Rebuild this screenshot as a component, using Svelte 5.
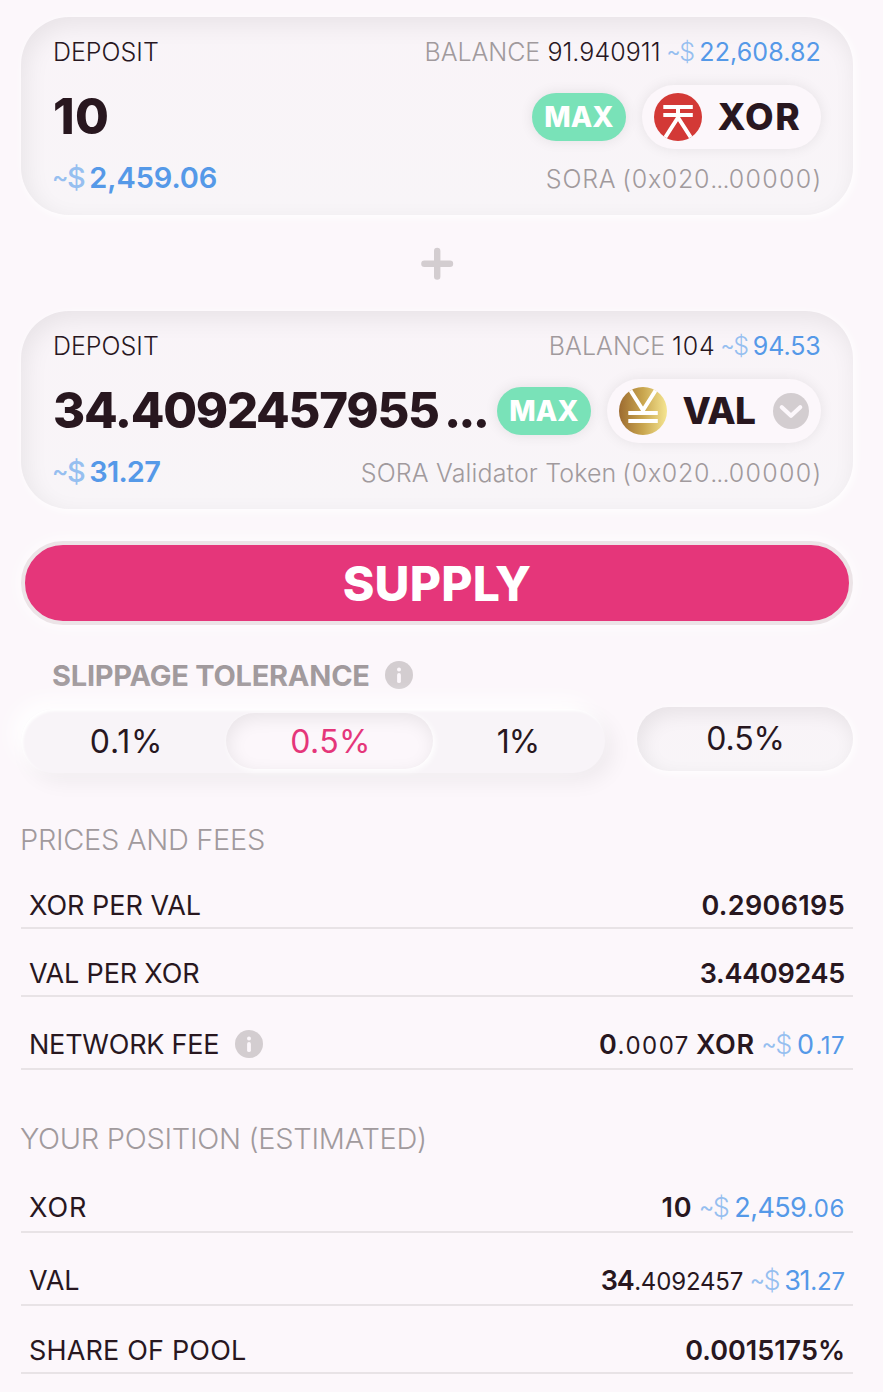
<script lang="ts">
  type Seg = { t: string; k?: string; ls?: number; ml?: number; fiat?: boolean };

  const address: Seg[] = [
    { t: '(0x020', ls: 0.7, ml: 5.9 },
    { t: '...', ls: -0.9 },
    { t: '00000)', ls: 1.3 }
  ];

  const cards = [
    {
      balance: [
        { t: 'BALANCE', k: 'muted', ls: -0.05 },
        { t: '91.940911', k: 'dark', ls: 0.05, ml: 7.2 },
        { t: '~$', fiat: true, ml: 6 },
        { t: '22,608.82', k: 'blue reg', ls: 0.1, ml: 4.2 }
      ] as Seg[],
      value: [{ t: '10', ls: 0.4 }] as Seg[],
      fiat: [
        { t: '~$', fiat: true },
        { t: '2,459.06', k: 'blue', ls: -0.1, ml: 3.6 }
      ] as Seg[],
      token: 'XOR',
      tokenLs: 1.58,
      selectable: false,
      info: [{ t: 'SORA', ls: 0.79 }, ...address] as Seg[],
      balanceEnd: 0.2
    },
    {
      balance: [
        { t: 'BALANCE', k: 'muted', ls: 0.05 },
        { t: '104', k: 'dark', ls: 0.8, ml: 6.9 },
        { t: '~$', fiat: true, ml: 5 },
        { t: '94.53', k: 'blue reg', ls: -0.11, ml: 3.8 }
      ] as Seg[],
      value: [
        { t: '34.4092457955', ls: -1.28 },
        { t: '...', ls: -2.9, ml: 5.2 }
      ] as Seg[],
      fiat: [
        { t: '~$', fiat: true },
        { t: '31.27', k: 'blue', ls: -0.8, ml: 3.6 }
      ] as Seg[],
      token: 'VAL',
      tokenLs: -0.7,
      selectable: true,
      info: [{ t: 'SORA Validator Token', ls: 0.14 }, ...address] as Seg[],
      balanceEnd: 0.4
    }
  ];

  const sections = [
    {
      title: 'PRICES AND FEES',
      ls: -0.3,
      first: true,
      rows: [
        { label: 'XOR PER VAL', ls: -0.02, value: [{ t: '0.2906195', k: 'bold', ls: 0.34 }] as Seg[] },
        { label: 'VAL PER XOR', ls: -0.17, value: [{ t: '3.4409245', k: 'bold', ls: -0.26 }] as Seg[] },
        {
          label: 'NETWORK FEE', ls: -0.22, info: true, tall: true,
          value: [
            { t: '0', k: 'bold' },
            { t: '.0007', k: 'small', ls: 1.5, ml: 0.7 },
            { t: 'XOR', k: 'bold', ls: 0.8, ml: 6 },
            { t: '~$', fiat: true, ml: 6.5 },
            { t: '0', k: 'blue', ml: 4.8 },
            { t: '.17', k: 'blue small', ls: 0.4, ml: 1.5 }
          ] as Seg[]
        }
      ]
    },
    {
      title: 'YOUR POSITION (ESTIMATED)',
      ls: -0.29,
      first: false,
      rows: [
        {
          label: 'XOR', ls: 0.9, tall: true,
          value: [
            { t: '10', k: 'bold', ls: 0.97 },
            { t: '~$', fiat: true, ml: 6.5 },
            { t: '2,459', k: 'blue', ls: -0.58, ml: 4.4 },
            { t: '.06', k: 'blue small', ls: 0.6, ml: 0.6 }
          ] as Seg[]
        },
        {
          label: 'VAL', ls: -0.02, tall: true,
          value: [
            { t: '34', k: 'bold', ls: -1.19 },
            { t: '.4092457', k: 'small', ls: -0.17, ml: 0.7 },
            { t: '~$', fiat: true, ml: 6.5 },
            { t: '31', k: 'blue', ls: -1.27, ml: 3.6 },
            { t: '.27', k: 'blue small', ls: -0.13, ml: 1 }
          ] as Seg[]
        },
        { label: 'SHARE OF POOL', ls: 0.17, value: [{ t: '0.0015175%', k: 'bold', ls: 0 }] as Seg[] }
      ]
    }
  ];

  const tabs = [
    { t: '0.1%', ls: 0.8 },
    { t: '0.5%', ls: 0.4 },
    { t: '1%', ls: -1 }
  ];
  let active = $state(1);
</script>

{#snippet segs(list: Seg[])}{#each list as s}{#if s.fiat}<span class="prefix" style="margin-left:{s.ml ?? 0}px"><span class="tilde">~</span>$</span>{:else}<span class={s.k ?? ''} style="letter-spacing:{s.ls ?? 0}px;margin-left:{s.ml ?? 0}px">{s.t}</span>{/if}{/each}{/snippet}

{#snippet infoIcon()}
  <svg class="info-icon" width="28" height="28" viewBox="0 0 28 28">
    <circle cx="14" cy="14" r="14" fill="#d3cdd0" />
    <circle cx="14" cy="8.6" r="2" fill="#fcf7fb" />
    <path d="M14 14v6.2" stroke="#fcf7fb" stroke-width="3.8" stroke-linecap="round" />
  </svg>
{/snippet}

<main>
  {#each cards as card, i}
    {#if i > 0}
      <div class="plus">
        <svg width="33" height="33" viewBox="0 0 33 33">
          <path d="M16.2 4v25.6M3.4 16.8h25.6" stroke="#d3cdd0" stroke-width="6.4" stroke-linecap="round" />
        </svg>
      </div>
    {/if}
    <section class="card">
      <div class="line top">
        <span class="dark">DEPOSIT</span>
        <div style="margin-right:{card.balanceEnd}px">{@render segs(card.balance)}</div>
      </div>
      <div class="line mid">
        <div class="amount">{@render segs(card.value)}</div>
        <button class="max">MAX</button>
        <div class="token" class:selectable={card.selectable}>
          {#if card.token === 'XOR'}
            <svg width="48" height="48" viewBox="0 0 48 48">
              <clipPath id="xor-clip"><circle cx="24" cy="24" r="24" /></clipPath>
              <g clip-path="url(#xor-clip)">
                <rect width="48" height="48" fill="#d33936" />
                <path d="M9.3 14h29.5M9.3 22h29.5M24 15v10M24 24.5L10.2 46M24 24.5L37.8 46" fill="none" stroke="#fff" stroke-width="4" />
              </g>
            </svg>
          {:else}
            <svg width="48" height="48" viewBox="0 0 48 48">
              <defs>
                <linearGradient id="val-fill" x1="0" x2="1" y1="0" y2="0">
                  <stop offset="0" stop-color="#9d6b30" />
                  <stop offset="0.5" stop-color="#c9a64f" />
                  <stop offset="1" stop-color="#f5e591" />
                </linearGradient>
                <clipPath id="val-clip"><circle cx="24" cy="24" r="24" /></clipPath>
              </defs>
              <g clip-path="url(#val-clip)">
                <rect width="48" height="48" fill="url(#val-fill)" />
                <path d="M9.3 26h29.5M9.3 34h29.5M10.2 1.5L24 23.2L37.8 1.5" fill="none" stroke="#fff" stroke-width="4" />
              </g>
            </svg>
          {/if}
          <span class="symbol" style="letter-spacing:{card.tokenLs}px">{card.token}</span>
          {#if card.selectable}
            <svg class="chevron" width="36" height="36" viewBox="0 0 36 36">
              <circle cx="18" cy="18" r="18" fill="#d3cdd0" />
              <path d="M8.8 14.2L18 22.8L27.2 14.2" fill="none" stroke="#fcf7fb" stroke-width="4.2" stroke-linecap="round" stroke-linejoin="round" />
            </svg>
          {/if}
        </div>
      </div>
      <div class="line bottom">
        <div class="fiat">{@render segs(card.fiat)}</div>
        <div class="muted info">{@render segs(card.info)}</div>
      </div>
    </section>
  {/each}

  <button class="supply">SUPPLY</button>

  <div class="slippage-label"><span>SLIPPAGE TOLERANCE</span>{@render infoIcon()}</div>
  <div class="slippage">
    <div class="tabs">
      {#each tabs as tab, i}
        <button class="tab" class:active={active === i} onclick={() => (active = i)} style="letter-spacing:{tab.ls}px">{tab.t}</button>
      {/each}
    </div>
    <div class="custom">0.5%</div>
  </div>

  {#each sections as section}
    <h2 class:first={section.first} style="letter-spacing:{section.ls}px">{section.title}</h2>
    {#each section.rows as row}
      <div class="row" class:tall={row.tall}>
        <div class="label"><span style="letter-spacing:{row.ls}px">{row.label}</span>{#if row.info}{@render infoIcon()}{/if}</div>
        <div class="value">{@render segs(row.value)}</div>
      </div>
    {/each}
  {/each}
</main>

<style>
  :global(body) {
    background: #fcf7fb;
  }
  main {
    box-sizing: border-box;
    width: 883px;
    height: 1392px;
    overflow: hidden;
    padding: 17px 30px 0 21px;
    display: flex;
    flex-direction: column;
    background: #fcf7fb;
    color: #28171f;
    font-family: Inter, sans-serif;
    font-size: 25px;
    font-weight: 300;
    white-space: nowrap;
  }
  button {
    font-family: inherit;
    border: 0;
    padding: 0;
    color: inherit;
  }
  svg {
    display: block;
    flex: none;
  }
  .card {
    box-sizing: border-box;
    flex: none;
    height: 198px;
    padding: 18px 32px 0 32px;
    border-radius: 48px;
    background: linear-gradient(#f9f4f8, #f8f5f8);
    box-shadow: 2px 2px 10px #fff, inset 4px 8px 24px rgba(0, 0, 0, 0.07);
  }
  .line {
    display: flex;
    justify-content: space-between;
    line-height: 34px;
  }
  .mid {
    align-items: center;
    height: 64px;
    margin-top: 16px;
  }
  .bottom {
    align-items: baseline;
    margin-top: 12px;
  }
  .info {
    margin-right: -1.4px;
  }
  .dark {
    color: #28171f;
  }
  .muted {
    color: #a19a9d;
  }
  .blue {
    color: #5599e8;
  }
  .prefix {
    color: #96bff0;
  }
  .tilde {
    font-size: 0.85em;
    font-weight: 400;
    line-height: 1;
    letter-spacing: -0.06em;
    vertical-align: 0.08em;
  }
  .reg {
    font-weight: 400;
  }
  .amount {
    flex: 1;
    font-size: 49px;
    font-weight: 800;
    line-height: 64px;
  }
  .max {
    flex: none;
    width: 94px;
    height: 48px;
    margin-right: 16px;
    border-radius: 24px;
    background: #79e2b8;
    color: #fff;
    font-size: 28px;
    font-weight: 800;
    box-shadow: 0 0 14px rgba(0, 0, 0, 0.09);
  }
  .token {
    box-sizing: border-box;
    flex: none;
    display: flex;
    align-items: center;
    gap: 15.5px;
    width: 179px;
    height: 64px;
    padding-left: 12px;
    border-radius: 32px;
    background: #fcf7fb;
    box-shadow: 0 0 14px rgba(0, 0, 0, 0.08);
  }
  .token.selectable {
    width: 214px;
  }
  .symbol {
    font-size: 37px;
    font-weight: 800;
  }
  .chevron {
    margin: 0 12px 0 auto;
  }
  .fiat {
    margin-left: -1px;
    font-size: 29px;
    font-weight: 600;
  }
  .fiat .prefix,
  .fiat .tilde {
    font-weight: 500;
  }
  .plus {
    display: flex;
    align-items: center;
    justify-content: center;
    flex: none;
    height: 96px;
  }
  .supply {
    box-sizing: border-box;
    flex: none;
    height: 84px;
    margin-top: 32px;
    border: 4px solid #ece4e7;
    border-radius: 42px;
    background: #e5367a;
    color: #fff;
    font-size: 48px;
    font-weight: 800;
    letter-spacing: 0.23px;
    box-shadow: 0 0 18px #fff;
  }
  .slippage-label {
    display: flex;
    align-items: center;
    height: 40px;
    margin: 30px 0 0 31px;
    color: #a19a9d;
    font-size: 29px;
    font-weight: 700;
    letter-spacing: -0.24px;
  }
  .info-icon {
    margin-left: 15px;
  }
  .slippage {
    display: flex;
    justify-content: space-between;
    height: 66px;
    margin-top: 12px;
    font-size: 32px;
    font-weight: 400;
  }
  .tabs {
    box-sizing: border-box;
    display: grid;
    grid-template-columns: 201px 207px 168px;
    width: 584px;
    height: 64px;
    margin-top: 2px;
    padding: 4px;
    border-radius: 32px;
    background: #f8f4f8;
    box-shadow: -8px -8px 22px #fff, 8px 8px 22px rgba(0, 0, 0, 0.06), inset 2px 2px 3px #fff;
  }
  .tab {
    padding: 1px 0 0 2px;
    border-radius: 28px;
    background: none;
    font-size: 32px;
    font-weight: 400;
  }
  .tab.active {
    background: #fcf7fb;
    color: #e5367a;
    box-shadow: 2px 2px 6px #fff, inset 2px 5px 18px rgba(0, 0, 0, 0.08);
  }
  .custom {
    box-sizing: border-box;
    width: 216px;
    height: 64px;
    padding-left: 1px;
    border-radius: 32px;
    background: linear-gradient(#f9f4f8, #f8f5f8);
    line-height: 64px;
    text-align: center;
    letter-spacing: -0.1px;
    box-shadow: 2px 2px 10px #fff, inset 4px 7px 20px rgba(0, 0, 0, 0.075);
  }
  h2 {
    height: 40px;
    margin: 49px 0 1px -1px;
    color: #a19a9d;
    font-size: 29px;
    font-weight: 300;
    line-height: 40px;
  }
  h2.first {
    margin: 47px 0 1px -1px;
  }
  .row {
    box-sizing: border-box;
    display: flex;
    justify-content: space-between;
    align-items: flex-end;
    height: 68px;
    padding: 0 8px 5px;
    border-bottom: 2px solid #e8e3e6;
    font-size: 27px;
    font-weight: 400;
    line-height: 32px;
  }
  .row.tall {
    height: 73px;
    padding-bottom: 7px;
  }
  .label {
    display: flex;
    align-items: center;
  }
  .label .info-icon {
    margin: 0 0 2px 16px;
  }
  .bold {
    font-weight: 600;
  }
  .small {
    font-size: 24px;
    line-height: 1;
  }
  .value .prefix {
    font-weight: 300;
  }
</style>
